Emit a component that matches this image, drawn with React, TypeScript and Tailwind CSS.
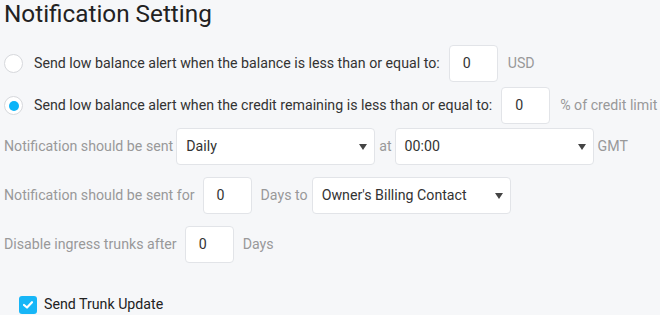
import React from "react";

const Arrow = () => (
  <svg width="8" height="6" viewBox="0 0 8 6" className="shrink-0">
    <path d="M0 0 L8 0 L4 6 Z" fill="#444" />
  </svg>
);

function NumBox({ className = "" }: { className?: string }) {
  return (
    <div
      className={
        "w-[49px] h-[37px] bg-white border border-[#e2e4e8] rounded-[4px] flex items-center pl-[13px] text-[14.2px] text-[#333] shrink-0 " +
        className
      }
    >
      0
    </div>
  );
}

function Select({ value, className = "" }: { value: string; className?: string }) {
  return (
    <div
      className={
        "w-[199px] h-[37px] bg-white border border-[#e2e4e8] rounded-[4px] flex items-center justify-between pl-[9px] pr-[7px] text-[14.2px] text-[#333] shrink-0 " +
        className
      }
    >
      <span>{value}</span>
      <Arrow />
    </div>
  );
}

export default function App() {
  return (
    <div
      className="w-[660px] h-[315px] bg-[#f6f7f9] overflow-hidden pl-[4px] text-[14.2px]"
      style={{ fontFamily: "Roboto, 'Liberation Sans', sans-serif" }}
    >
      <div className="text-[24.3px] leading-[28px] text-[#222]">Notification Setting</div>

      <div className="flex items-center mt-[17px] h-[37px]">
        <div className="w-[19px] h-[19px] rounded-full bg-white border border-[#d6d8dc] shrink-0" />
        <span className="ml-[11px] text-[#333]">
          Send low balance alert when the balance is less than or equal to:
        </span>
        <NumBox className="ml-[9px]" />
        <span className="ml-[10px] text-[#999]">USD</span>
      </div>

      <div className="flex items-center mt-[5px] h-[37px]">
        <div className="w-[19px] h-[19px] rounded-full bg-white border border-[#d6d8dc] flex items-center justify-center shrink-0">
          <div className="w-[10px] h-[10px] rounded-full bg-[#0bb4f8]" />
        </div>
        <span className="ml-[11px] text-[#333]">
          Send low balance alert when the credit remaining is less than or equal to:
        </span>
        <NumBox className="ml-[9px]" />
        <span className="ml-[10px] text-[#999]">% of credit limit</span>
      </div>

      <div className="flex items-center mt-[4px] h-[37px]">
        <span className="text-[#999]">Notification should be sent</span>
        <Select value="Daily" className="ml-[3px]" />
        <span className="ml-[4px] text-[#999]">at</span>
        <Select value="00:00" className="ml-[3px]" />
        <span className="ml-[4px] text-[#999]">GMT</span>
      </div>

      <div className="flex items-center mt-[12px] h-[37px]">
        <span className="text-[#999]">Notification should be sent for</span>
        <NumBox className="ml-[8px]" />
        <span className="ml-[9px] text-[#999]">Days to</span>
        <Select value="Owner's Billing Contact" className="ml-[4px]" />
      </div>

      <div className="flex items-center mt-[12px] h-[37px]">
        <span className="text-[#999]">Disable ingress trunks after</span>
        <NumBox className="ml-[8px]" />
        <span className="ml-[9px] text-[#999]">Days</span>
      </div>

      <div className="flex items-center mt-[31px] ml-[15px]">
        <div className="w-[18px] h-[18px] rounded-[3px] bg-[#17b6f7] flex items-center justify-center shrink-0">
          <svg width="10" height="8" viewBox="0 0 10 8">
            <path d="M1 4 L4 6.5 L9 1.2" stroke="white" strokeWidth="2.2" fill="none" strokeLinecap="round" strokeLinejoin="round" />
          </svg>
        </div>
        <span className="ml-[7px] text-[#222]">Send Trunk Update</span>
      </div>
    </div>
  );
}
